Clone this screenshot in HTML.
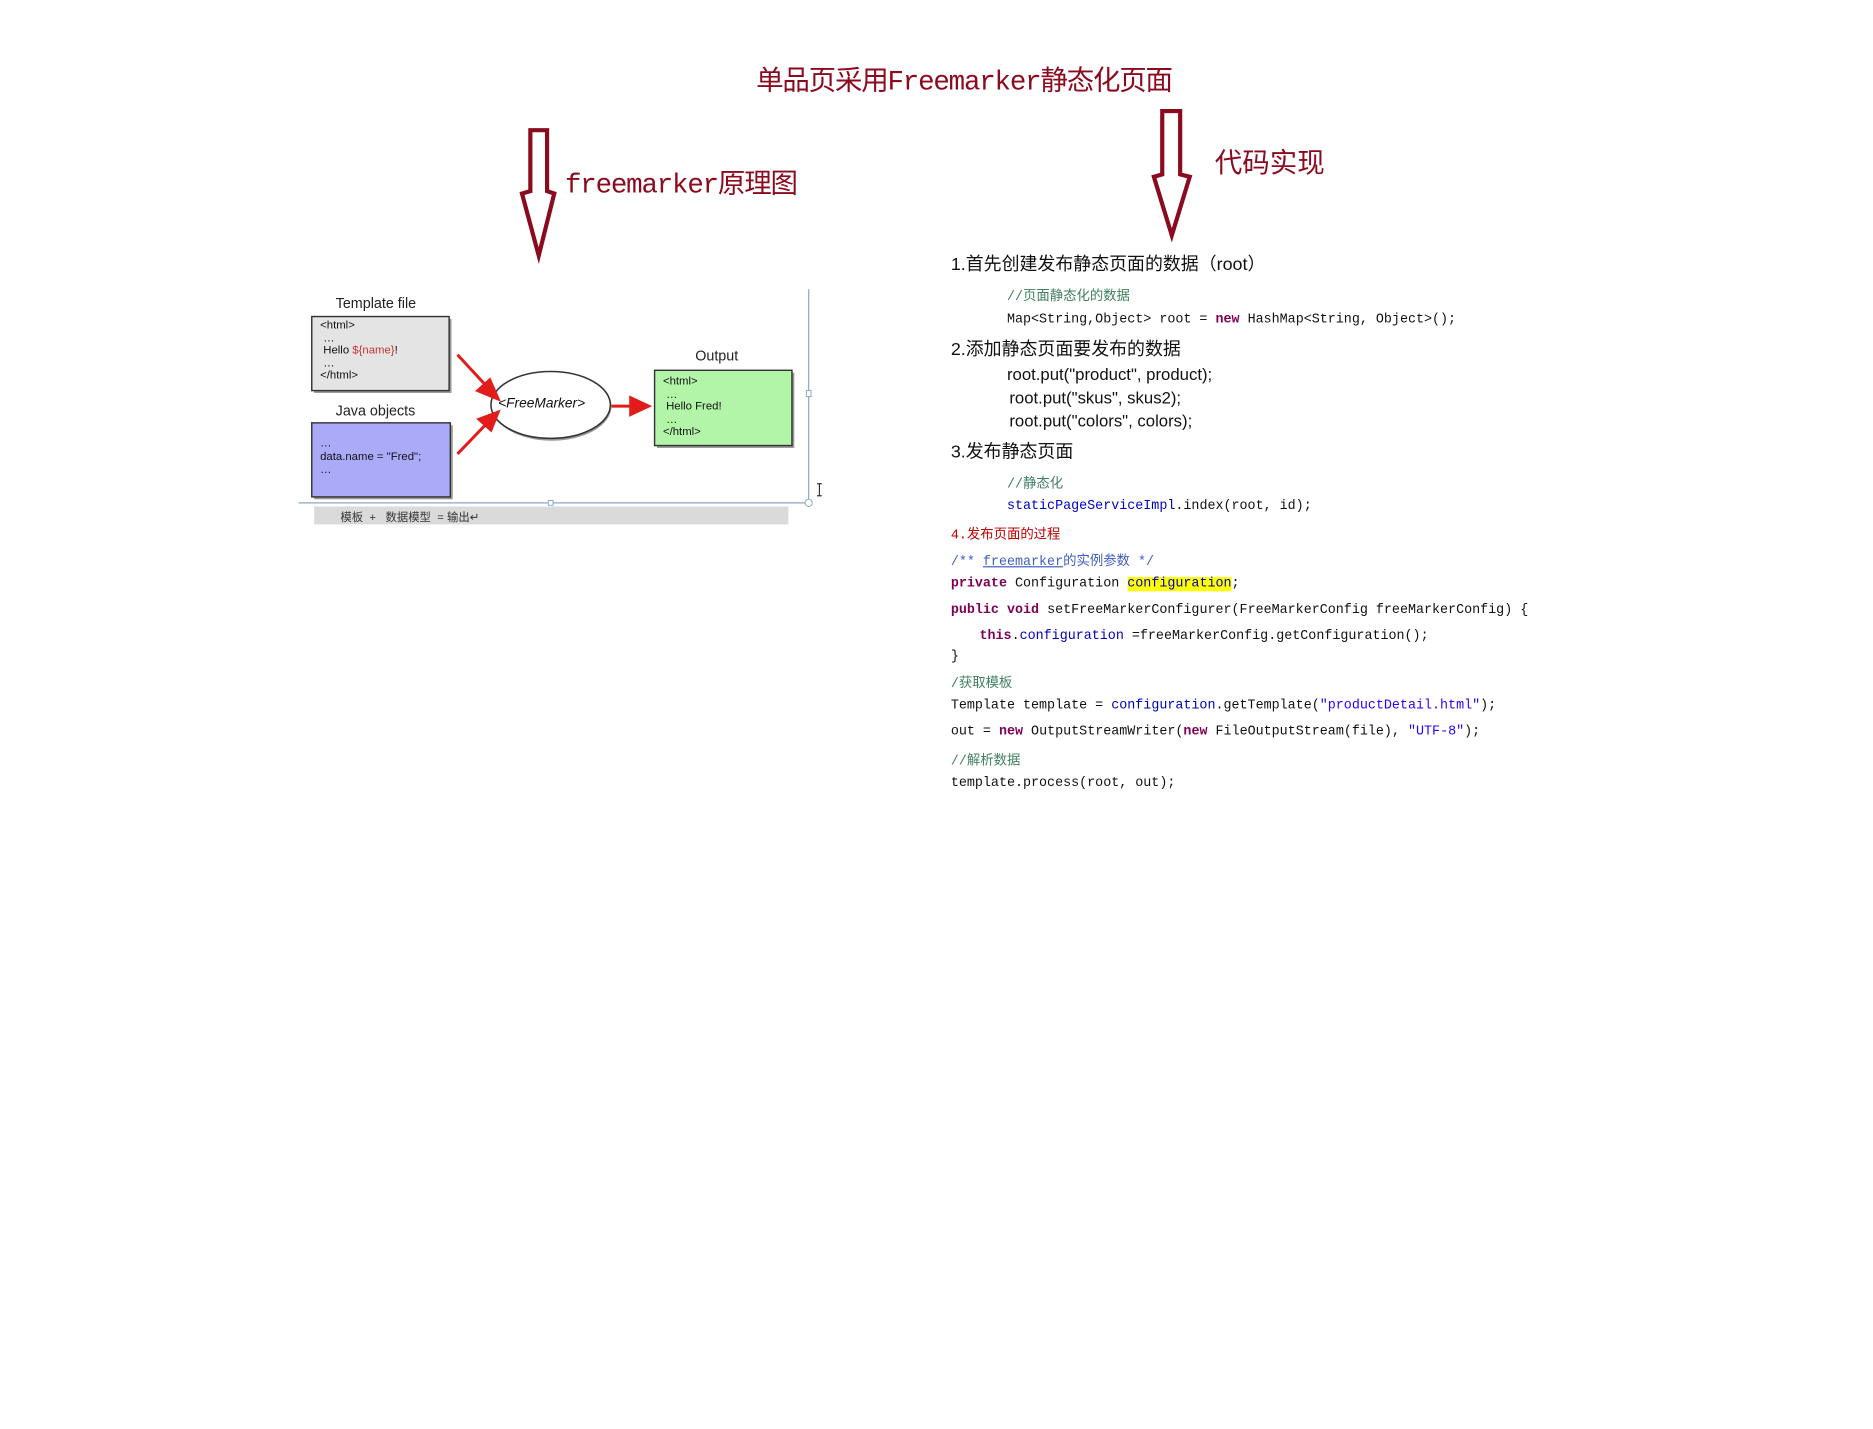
<!DOCTYPE html>
<html><head><meta charset="utf-8"><style>
html,body{margin:0;padding:0;background:#fff;width:1873px;height:1428px;overflow:hidden}
#w{position:absolute;left:0;top:0;width:1568px;height:1196px;transform:scale(1.1945);transform-origin:0 0}
.t{position:absolute;white-space:nowrap;font-family:"Liberation Sans","Noto Sans CJK SC",sans-serif;color:#111}
.m{font-family:"Liberation Mono","Noto Sans CJK SC",monospace;font-size:11.2px;margin-top:3px}
.r{color:#8b0a1e}
.kw{color:#7f0055;font-weight:bold}
.cm{color:#3f7f5f}
.bl{color:#0000c0}
.st{color:#2a00ff}
.jd{color:#3f5fbf}
</style></head><body><div id="w">
<div class="t r" style="left:633px;top:48px;font-size:23px;font-family:'Liberation Mono','Noto Sans CJK SC',monospace;letter-spacing:-1px">单品页采用Freemarker静态化页面</div>
<div class="t r" style="left:473px;top:134px;font-size:23px;font-family:'Liberation Mono','Noto Sans CJK SC',monospace;letter-spacing:-1px">freemarker原理图</div>
<div class="t r" style="left:1017px;top:117px;font-size:23px">代码实现</div>
<svg style="position:absolute;left:0;top:0" width="1550" height="700">
<path d="M444 109 H458 V160 L464 162 L451 214 L437 162 L444 160 Z" fill="none" stroke="#8b0a1e" stroke-width="3.5"/>
<path d="M973 93 H988 V146 L996 148 L981 197 L966 148 L973 146 Z" fill="none" stroke="#8b0a1e" stroke-width="3.5"/>
<line x1="677" y1="242" x2="677" y2="421" stroke="#8aa6c8" stroke-width="1"/>
<line x1="250" y1="421" x2="677" y2="421" stroke="#8aa6c8" stroke-width="1"/>
<rect x="675" y="327" width="4" height="5" fill="#fff" stroke="#8aa6c8" stroke-width=".8"/>
<rect x="459" y="419" width="4" height="4" fill="#fff" stroke="#8aa6c8" stroke-width=".8"/>
<circle cx="677" cy="421" r="3" fill="#fff" stroke="#8aa6c8" stroke-width=".8"/>
<rect x="263" y="424" width="397" height="15" fill="#dadada"/>
<rect x="263" y="267" width="115" height="62" fill="#999"/>
<rect x="261" y="265" width="115" height="62" fill="#e4e4e4" stroke="#333" stroke-width="1.2"/>
<rect x="263" y="356" width="116" height="62" fill="#999"/>
<rect x="261" y="354" width="116" height="62" fill="#aaaaf8" stroke="#333" stroke-width="1.2"/>
<rect x="550" y="312" width="115" height="63" fill="#999"/>
<rect x="548" y="310" width="115" height="63" fill="#b2f5a8" stroke="#333" stroke-width="1.2"/>
<ellipse cx="462" cy="340" rx="50" ry="29" fill="#999"/>
<ellipse cx="461" cy="339" rx="50" ry="28" fill="#fff" stroke="#333" stroke-width="1.3"/>
<g stroke="#e21b1b" stroke-width="2.5" fill="#e21b1b">
<line x1="383" y1="297" x2="408" y2="324"/><path d="M417 334 L400 327 L410 318 Z"/>
<line x1="383" y1="380" x2="408" y2="354"/><path d="M417 345 L401 351 L411 360 Z"/>
<line x1="512" y1="340" x2="530" y2="340"/><path d="M543 340 L528 333 L528 347 Z"/>
</g>
<path d="M684 405 H688 M686 405 V415 M684 415 H688" stroke="#333" stroke-width="1" fill="none"/>
</svg>
<div class="t" style="left:281px;top:247px;font-size:12px;color:#222">Template file</div>
<div class="t" style="left:281px;top:337px;font-size:12px;color:#222">Java objects</div>
<div class="t" style="left:582px;top:291px;font-size:12px;color:#222">Output</div>
<div class="t" style="left:268px;top:268px;font-size:9.5px;line-height:10.5px;color:#111">&lt;html&gt;<br>&nbsp;…<br>&nbsp;Hello <span style="color:#c33">${name}</span>!<br>&nbsp;…<br>&lt;/html&gt;</div>
<div class="t" style="left:268px;top:366px;font-size:9.5px;line-height:11px;color:#111">…<br>data.name = "Fred";<br>…</div>
<div class="t" style="left:555px;top:315px;font-size:9.5px;line-height:10.5px;color:#111">&lt;html&gt;<br>&nbsp;…<br>&nbsp;Hello Fred!<br>&nbsp;…<br>&lt;/html&gt;</div>
<div class="t" style="left:417px;top:332px;font-size:11.5px;font-style:italic;color:#111">&lt;FreeMarker&gt;</div>
<div class="t" style="left:285px;top:425px;font-size:9.5px;color:#333">模板 &nbsp;+ &nbsp; 数据模型 &nbsp;= 输出↵</div>
<div class="t" style="left:796px;top:210px;font-size:15px">1.首先创建发布静态页面的数据（root）</div>
<div class="t m cm" style="left:843px;top:236px">//页面静态化的数据</div>
<div class="t m" style="left:843px;top:259px">Map&lt;String,Object&gt; root = <span class="kw">new</span> HashMap&lt;String, Object&gt;();</div>
<div class="t" style="left:796px;top:281px;font-size:15px">2.添加静态页面要发布的数据</div>
<div class="t" style="left:843px;top:305px;font-size:14px">root.put("product", product);</div>
<div class="t" style="left:845px;top:325px;font-size:14px">root.put("skus", skus2);</div>
<div class="t" style="left:845px;top:344px;font-size:14px">root.put("colors", colors);</div>
<div class="t" style="left:796px;top:367px;font-size:15px">3.发布静态页面</div>
<div class="t m cm" style="left:843px;top:393px">//静态化</div>
<div class="t m" style="left:843px;top:415px"><span class="bl">staticPageServiceImpl</span>.index(root, id);</div>
<div class="t m" style="left:796px;top:436px;color:#c00000">4.发布页面的过程</div>
<div class="t m jd" style="left:796px;top:458px">/** <u>freemarker</u>的实例参数 */</div>
<div class="t m" style="left:796px;top:480px"><span class="kw">private</span> Configuration <span class="bl" style="background:#ffff00">configuration</span>;</div>
<div class="t m" style="left:796px;top:502px"><span class="kw">public</span> <span class="kw">void</span> setFreeMarkerConfigurer(FreeMarkerConfig freeMarkerConfig) {</div>
<div class="t m" style="left:820px;top:524px"><span class="kw">this</span>.<span class="bl">configuration</span> =freeMarkerConfig.getConfiguration();</div>
<div class="t m" style="left:796px;top:541px">}</div>
<div class="t m cm" style="left:796px;top:560px">/获取模板</div>
<div class="t m" style="left:796px;top:582px">Template template = <span class="bl">configuration</span>.getTemplate(<span class="st">"productDetail.html"</span>);</div>
<div class="t m" style="left:796px;top:604px">out = <span class="kw">new</span> OutputStreamWriter(<span class="kw">new</span> FileOutputStream(file), <span class="st">"UTF-8"</span>);</div>
<div class="t m cm" style="left:796px;top:625px">//解析数据</div>
<div class="t m" style="left:796px;top:647px">template.process(root, out);</div>
</div></body></html>
